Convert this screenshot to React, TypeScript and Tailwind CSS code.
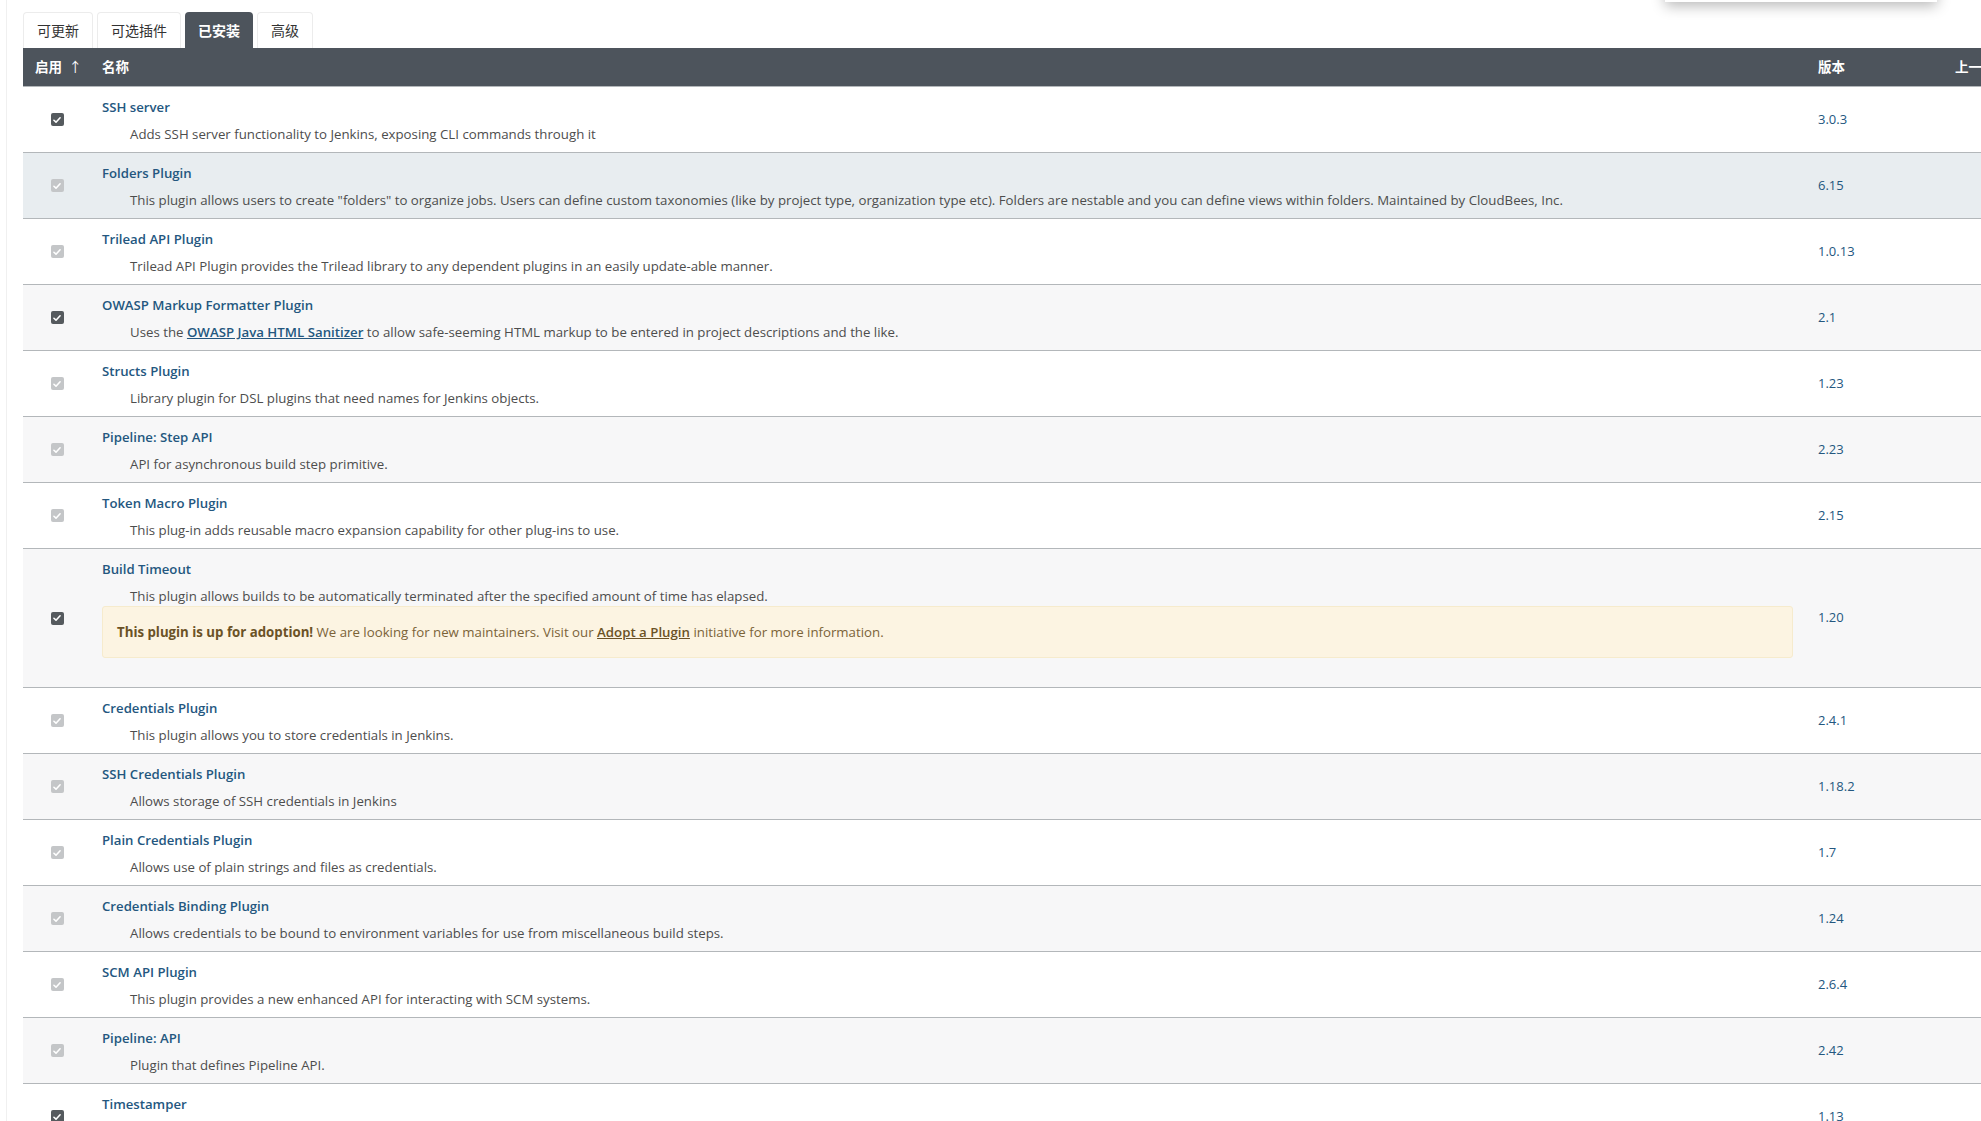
import type { ReactNode } from "react"

type Row = {
  name: string
  desc: ReactNode
  version: string
  enabled: boolean
  bg: "white" | "gray" | "hover"
  adoption?: boolean
}

const ROWS: Row[] = [
  {
    name: "SSH server",
    desc: "Adds SSH server functionality to Jenkins, exposing CLI commands through it",
    version: "3.0.3",
    enabled: true,
    bg: "white",
  },
  {
    name: "Folders Plugin",
    desc: 'This plugin allows users to create "folders" to organize jobs. Users can define custom taxonomies (like by project type, organization type etc). Folders are nestable and you can define views within folders. Maintained by CloudBees, Inc.',
    version: "6.15",
    enabled: false,
    bg: "hover",
  },
  {
    name: "Trilead API Plugin",
    desc: "Trilead API Plugin provides the Trilead library to any dependent plugins in an easily update-able manner.",
    version: "1.0.13",
    enabled: false,
    bg: "white",
  },
  {
    name: "OWASP Markup Formatter Plugin",
    desc: (
      <>
        Uses the{" "}
        <a href="#" className="font-semibold text-[#24577f] underline">
          OWASP Java HTML Sanitizer
        </a>{" "}
        to allow safe-seeming HTML markup to be entered in project descriptions and the like.
      </>
    ),
    version: "2.1",
    enabled: true,
    bg: "gray",
  },
  {
    name: "Structs Plugin",
    desc: "Library plugin for DSL plugins that need names for Jenkins objects.",
    version: "1.23",
    enabled: false,
    bg: "white",
  },
  {
    name: "Pipeline: Step API",
    desc: "API for asynchronous build step primitive.",
    version: "2.23",
    enabled: false,
    bg: "gray",
  },
  {
    name: "Token Macro Plugin",
    desc: "This plug-in adds reusable macro expansion capability for other plug-ins to use.",
    version: "2.15",
    enabled: false,
    bg: "white",
  },
  {
    name: "Build Timeout",
    desc: "This plugin allows builds to be automatically terminated after the specified amount of time has elapsed.",
    version: "1.20",
    enabled: true,
    bg: "gray",
    adoption: true,
  },
  {
    name: "Credentials Plugin",
    desc: "This plugin allows you to store credentials in Jenkins.",
    version: "2.4.1",
    enabled: false,
    bg: "white",
  },
  {
    name: "SSH Credentials Plugin",
    desc: "Allows storage of SSH credentials in Jenkins",
    version: "1.18.2",
    enabled: false,
    bg: "gray",
  },
  {
    name: "Plain Credentials Plugin",
    desc: "Allows use of plain strings and files as credentials.",
    version: "1.7",
    enabled: false,
    bg: "white",
  },
  {
    name: "Credentials Binding Plugin",
    desc: "Allows credentials to be bound to environment variables for use from miscellaneous build steps.",
    version: "1.24",
    enabled: false,
    bg: "gray",
  },
  {
    name: "SCM API Plugin",
    desc: "This plugin provides a new enhanced API for interacting with SCM systems.",
    version: "2.6.4",
    enabled: false,
    bg: "white",
  },
  {
    name: "Pipeline: API",
    desc: "Plugin that defines Pipeline API.",
    version: "2.42",
    enabled: false,
    bg: "gray",
  },
  {
    name: "Timestamper",
    desc: "Adds timestamps to the Console Output",
    version: "1.13",
    enabled: true,
    bg: "white",
  },
]

const TABS = ["可更新", "可选插件", "已安装", "高级"]

function Check({ enabled }: { enabled: boolean }) {
  return (
    <span
      className={`inline-flex h-[13px] w-[13px] items-center justify-center rounded-[2px] ${
        enabled ? "bg-[#555a5e]" : "bg-[#c4c6c8]"
      }`}
    >
      <svg viewBox="0 0 12 12" className="h-[10px] w-[10px]" fill="none">
        <path d="M2.3 6.3 L4.8 8.6 L9.7 3.3" stroke="#fff" strokeWidth="1.9" strokeLinecap="round" strokeLinejoin="round" />
      </svg>
    </span>
  )
}

function PluginRow({ row }: { row: Row }) {
  const bg = row.bg === "hover" ? "bg-[#e8edf0]" : row.bg === "gray" ? "bg-[#f7f7f8]" : "bg-white"
  return (
    <div className={`flex border-t border-[#b3b7ba] ${bg}`}>
      <div className="flex w-[68px] shrink-0 items-center justify-center">
        <Check enabled={row.enabled} />
      </div>
      <div className={`w-[1717px] shrink-0 pl-[11px] pt-[9px] ${row.adoption ? "pb-[29px]" : "pb-[8px]"}`}>
        <a href="#" className="block text-[13.2px] font-semibold leading-[22px] text-[#24577f]">
          {row.name}
        </a>
        <div className="mt-[6px] pl-[28px] text-[13.25px] leading-[20px] text-[#4d4d4d]">{row.desc}</div>
        {row.adoption && (
          <div className="mr-[15px] rounded-[3px] border border-[#f6ebcd] bg-[#fcf4e2] px-[14px] py-[15px] text-[13.25px] leading-[20px] text-[#7b6338]">
            <strong className="font-bold text-[#6b5226]">This plugin is up for adoption!</strong> We are looking for new
            maintainers. Visit our{" "}
            <a href="#" className="font-semibold text-[#6b5226] underline">
              Adopt a Plugin
            </a>{" "}
            initiative for more information.
          </div>
        )}
      </div>
      <div className="flex w-[147px] shrink-0 items-center pl-[10px]">
        <a href="#" className="text-[13px] font-medium text-[#24577f]">
          {row.version}
        </a>
      </div>
      <div className="w-[120px] shrink-0" />
    </div>
  )
}

export default function App() {
  return (
    <div
      className="relative h-[1121px] w-[1981px] overflow-hidden bg-white pl-[6px]"
      style={{ fontFamily: '"Open Sans", "Noto Sans", "Noto Sans CJK SC", sans-serif' }}
    >
      <div className="absolute left-[1665px] top-[-40px] h-[42px] w-[272px] bg-white shadow-[0_4px_14px_rgba(0,0,0,0.28)]" />
      <div className="h-full border-l border-[#f0f0f0] pl-[16px] pt-[12px]">
        <div className="flex gap-[4px]">
          {TABS.map((t) => (
            <div
              key={t}
              className={`flex h-[36px] items-center rounded-t-[4px] px-[13px] text-[14px] ${
                t === "已安装"
                  ? "bg-[#4d545c] font-bold text-white"
                  : "border border-b-0 border-[#ececec] text-[#333]"
              }`}
            >
              {t}
            </div>
          ))}
        </div>
        <div className="w-[2100px]">
          <div className="flex h-[38px] items-center bg-[#4d545c] text-[13.5px] font-bold text-white">
            <div className="w-[68px] shrink-0 pl-[12px]">
              启用 <span className="ml-[3px] font-normal">↑</span>
            </div>
            <div className="w-[1717px] shrink-0 pl-[11px]">名称</div>
            <div className="w-[147px] shrink-0 pl-[10px]">版本</div>
            <div className="shrink-0">上一个版本</div>
          </div>
          {ROWS.map((r) => (
            <PluginRow key={r.name} row={r} />
          ))}
        </div>
      </div>
    </div>
  )
}
